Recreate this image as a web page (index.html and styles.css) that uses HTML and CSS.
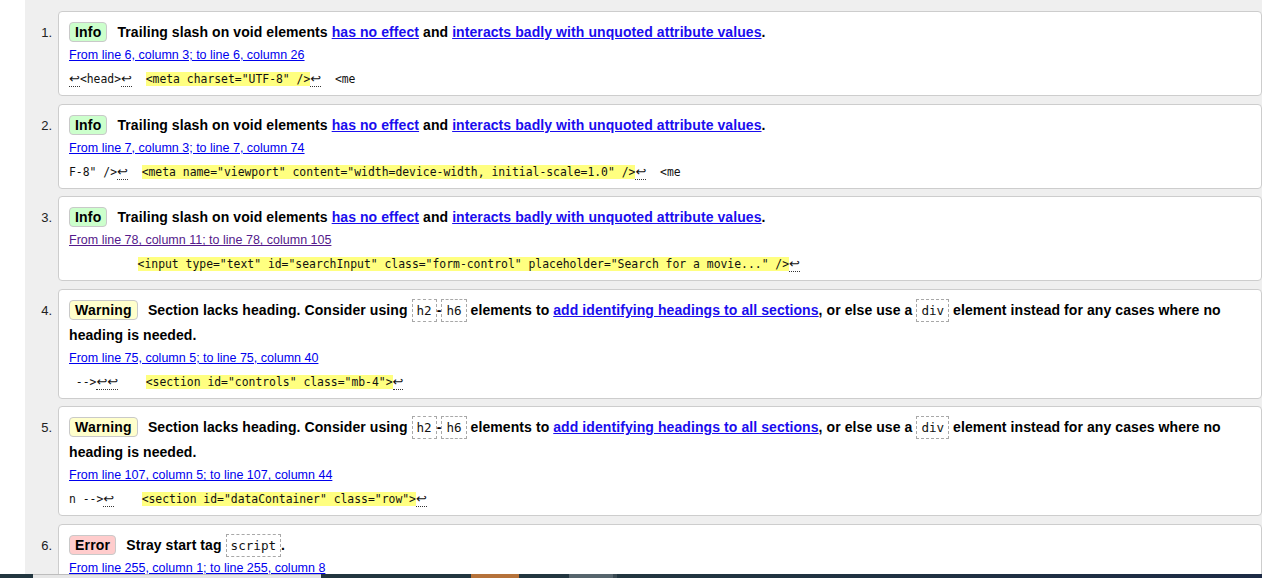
FILE: index.html
```html
<!DOCTYPE html>
<html lang="en">
<head>
<meta charset="UTF-8">
<title>Validator messages</title>
<link rel="stylesheet" href="styles.css">
</head>
<body>
<div class="page">
  <div class="gutter"></div>
  <main class="results">
    <ol class="messages">
      <li class="item">
        <div class="num">1.</div>
        <div class="card">
          <p class="msg"><span class="badge info">Info</span>Trailing slash on void elements <a href="#">has no effect</a> and <a href="#">interacts badly with unquoted attribute values</a>.</p>
          <p class="loc"><a href="#">From line 6, column 3; to line 6, column 26</a></p>
          <p class="code"><span class="lf">↩</span>&lt;head&gt;<span class="lf">↩</span>  <mark class="hl">&lt;meta charset="UTF-8" /&gt;</mark><span class="lf">↩</span>  &lt;me</p>
        </div>
      </li>
      <li class="item">
        <div class="num">2.</div>
        <div class="card">
          <p class="msg"><span class="badge info">Info</span>Trailing slash on void elements <a href="#">has no effect</a> and <a href="#">interacts badly with unquoted attribute values</a>.</p>
          <p class="loc"><a href="#">From line 7, column 3; to line 7, column 74</a></p>
          <p class="code">F-8" /&gt;<span class="lf">↩</span>  <mark class="hl">&lt;meta name="viewport" content="width=device-width, initial-scale=1.0" /&gt;</mark><span class="lf">↩</span>  &lt;me</p>
        </div>
      </li>
      <li class="item">
        <div class="num">3.</div>
        <div class="card">
          <p class="msg"><span class="badge info">Info</span>Trailing slash on void elements <a href="#">has no effect</a> and <a href="#">interacts badly with unquoted attribute values</a>.</p>
          <p class="loc"><a href="#" class="visited">From line 78, column 11; to line 78, column 105</a></p>
          <p class="code">          <mark class="hl">&lt;input type="text" id="searchInput" class="form-control" placeholder="Search for a movie..." /&gt;</mark><span class="lf">↩</span></p>
        </div>
      </li>
      <li class="item">
        <div class="num">4.</div>
        <div class="card">
          <p class="msg"><span class="badge warning">Warning</span>Section lacks heading. Consider using <code class="tag">h2</code>-<code class="tag">h6</code> elements to <a href="#">add identifying headings to all sections</a>, or else use a <code class="tag">div</code> element instead for any cases where no heading is needed.</p>
          <p class="loc"><a href="#">From line 75, column 5; to line 75, column 40</a></p>
          <p class="code"> --&gt;<span class="lf">↩↩</span>    <mark class="hl">&lt;section id="controls" class="mb-4"&gt;</mark><span class="lf">↩</span></p>
        </div>
      </li>
      <li class="item">
        <div class="num">5.</div>
        <div class="card">
          <p class="msg"><span class="badge warning">Warning</span>Section lacks heading. Consider using <code class="tag">h2</code>-<code class="tag">h6</code> elements to <a href="#">add identifying headings to all sections</a>, or else use a <code class="tag">div</code> element instead for any cases where no heading is needed.</p>
          <p class="loc"><a href="#">From line 107, column 5; to line 107, column 44</a></p>
          <p class="code">n --&gt;<span class="lf">↩</span>    <mark class="hl">&lt;section id="dataContainer" class="row"&gt;</mark><span class="lf">↩</span></p>
        </div>
      </li>
      <li class="item">
        <div class="num">6.</div>
        <div class="card">
          <p class="msg"><span class="badge error">Error</span>Stray start tag <code class="tag">script</code>.</p>
          <p class="loc"><a href="#">From line 255, column 1; to line 255, column 8</a></p>
          <p class="code">  <mark class="hl">&lt;script src="script.js"&gt;</mark><span class="lf">↩</span></p>
        </div>
      </li>
    </ol>
  </main>
</div>
<div class="taskbar">
  <span class="seg dark s1"></span>
  <span class="seg light s2"></span>
  <span class="seg dark s3"></span>
  <span class="seg orange s4"></span>
  <span class="seg dark s5"></span>
  <span class="seg grey s6"></span>
  <span class="seg edge s7"></span>
  <span class="seg dark fill"></span>
</div>
</body>
</html>
```

FILE: styles.css
```css
html, body {
  margin: 0;
  padding: 0;
}

body {
  background: #ffffff;
  font-family: "Liberation Sans", Arial, sans-serif;
  color: #000;
  overflow: hidden;
}

.page {
  display: flex;
  min-height: 578px;
}

.gutter {
  width: 25px;
  flex: none;
  background: #ffffff;
}

.results {
  flex: 1;
  background: #efefef;
  padding-top: 11px;
}

.messages {
  list-style: none;
  margin: 0;
  padding: 0;
}

.item {
  display: flex;
  margin-bottom: 7.6px;
}

.num {
  width: 27px;
  flex: none;
  text-align: right;
  padding-right: 6px;
  padding-top: 9px;
  font-size: 13px;
  line-height: 25px;
  color: #222;
}

.card {
  flex: 1;
  background: #fff;
  border: 1px solid #cdcdcd;
  border-radius: 4px;
  padding: 8px 10px 8px 10px;
  min-width: 0;
}

.msg {
  margin: 0;
  font-size: 14px;
  font-weight: bold;
  line-height: 25px;
  letter-spacing: 0.08px;
}

.msg a {
  color: #1a0dee;
}

.badge {
  display: inline-block;
  padding: 0 5px;
  margin-right: 10px;
  border: 1px solid #c9c9c9;
  border-radius: 4px;
  line-height: 18px;
  font-size: 14px;
  font-weight: bold;
  letter-spacing: 0.2px;
}

.badge.info {
  background: #ccffcc;
}

.badge.warning {
  background: #ffffcc;
}

.badge.error {
  background: #ffcccc;
}

.tag {
  font-family: "DejaVu Sans Mono", monospace;
  font-weight: normal;
  font-size: 12.6px;
  letter-spacing: 0;
  padding: 3px 4px;
  border: 1px dashed #a8a8a8;
  color: #111;
}

.loc {
  margin: 2px 0 0 0;
  font-size: 12.5px;
  line-height: 16px;
}

.loc a {
  color: #0000ee;
}

.loc a.visited {
  color: #551a8b;
}

.code {
  margin: 8px 0 0 0;
  font-family: "DejaVu Sans Mono", monospace;
  font-size: 11.4px;
  line-height: 16px;
  white-space: pre;
  color: #111;
}

.hl {
  background: #ffff80;
  color: #111;
}

.lf {
  font-family: "DejaVu Sans", sans-serif;
  font-size: 13px;
  line-height: 14px;
  border-bottom: 1px dotted #333;
}

.taskbar {
  position: fixed;
  left: 0;
  right: 0;
  bottom: 0;
  height: 4px;
  display: flex;
}

.seg {
  display: block;
  height: 100%;
}

.dark { background: #223640; }
.light { background: #e6e6e6; border-top: 1px solid #bdbdbd; box-sizing: border-box; }
.orange { background: #b5723a; }
.grey { background: #56656d; }
.edge { background: #3a4a52; }

.s1 { width: 33px; }
.s2 { width: 288px; }
.s3 { width: 150px; }
.s4 { width: 48px; }
.s5 { width: 50px; }
.s6 { width: 44px; }
.s7 { width: 4px; }
.fill { flex: 1; background: linear-gradient(90deg, #223640, #1d2b45); }
```
